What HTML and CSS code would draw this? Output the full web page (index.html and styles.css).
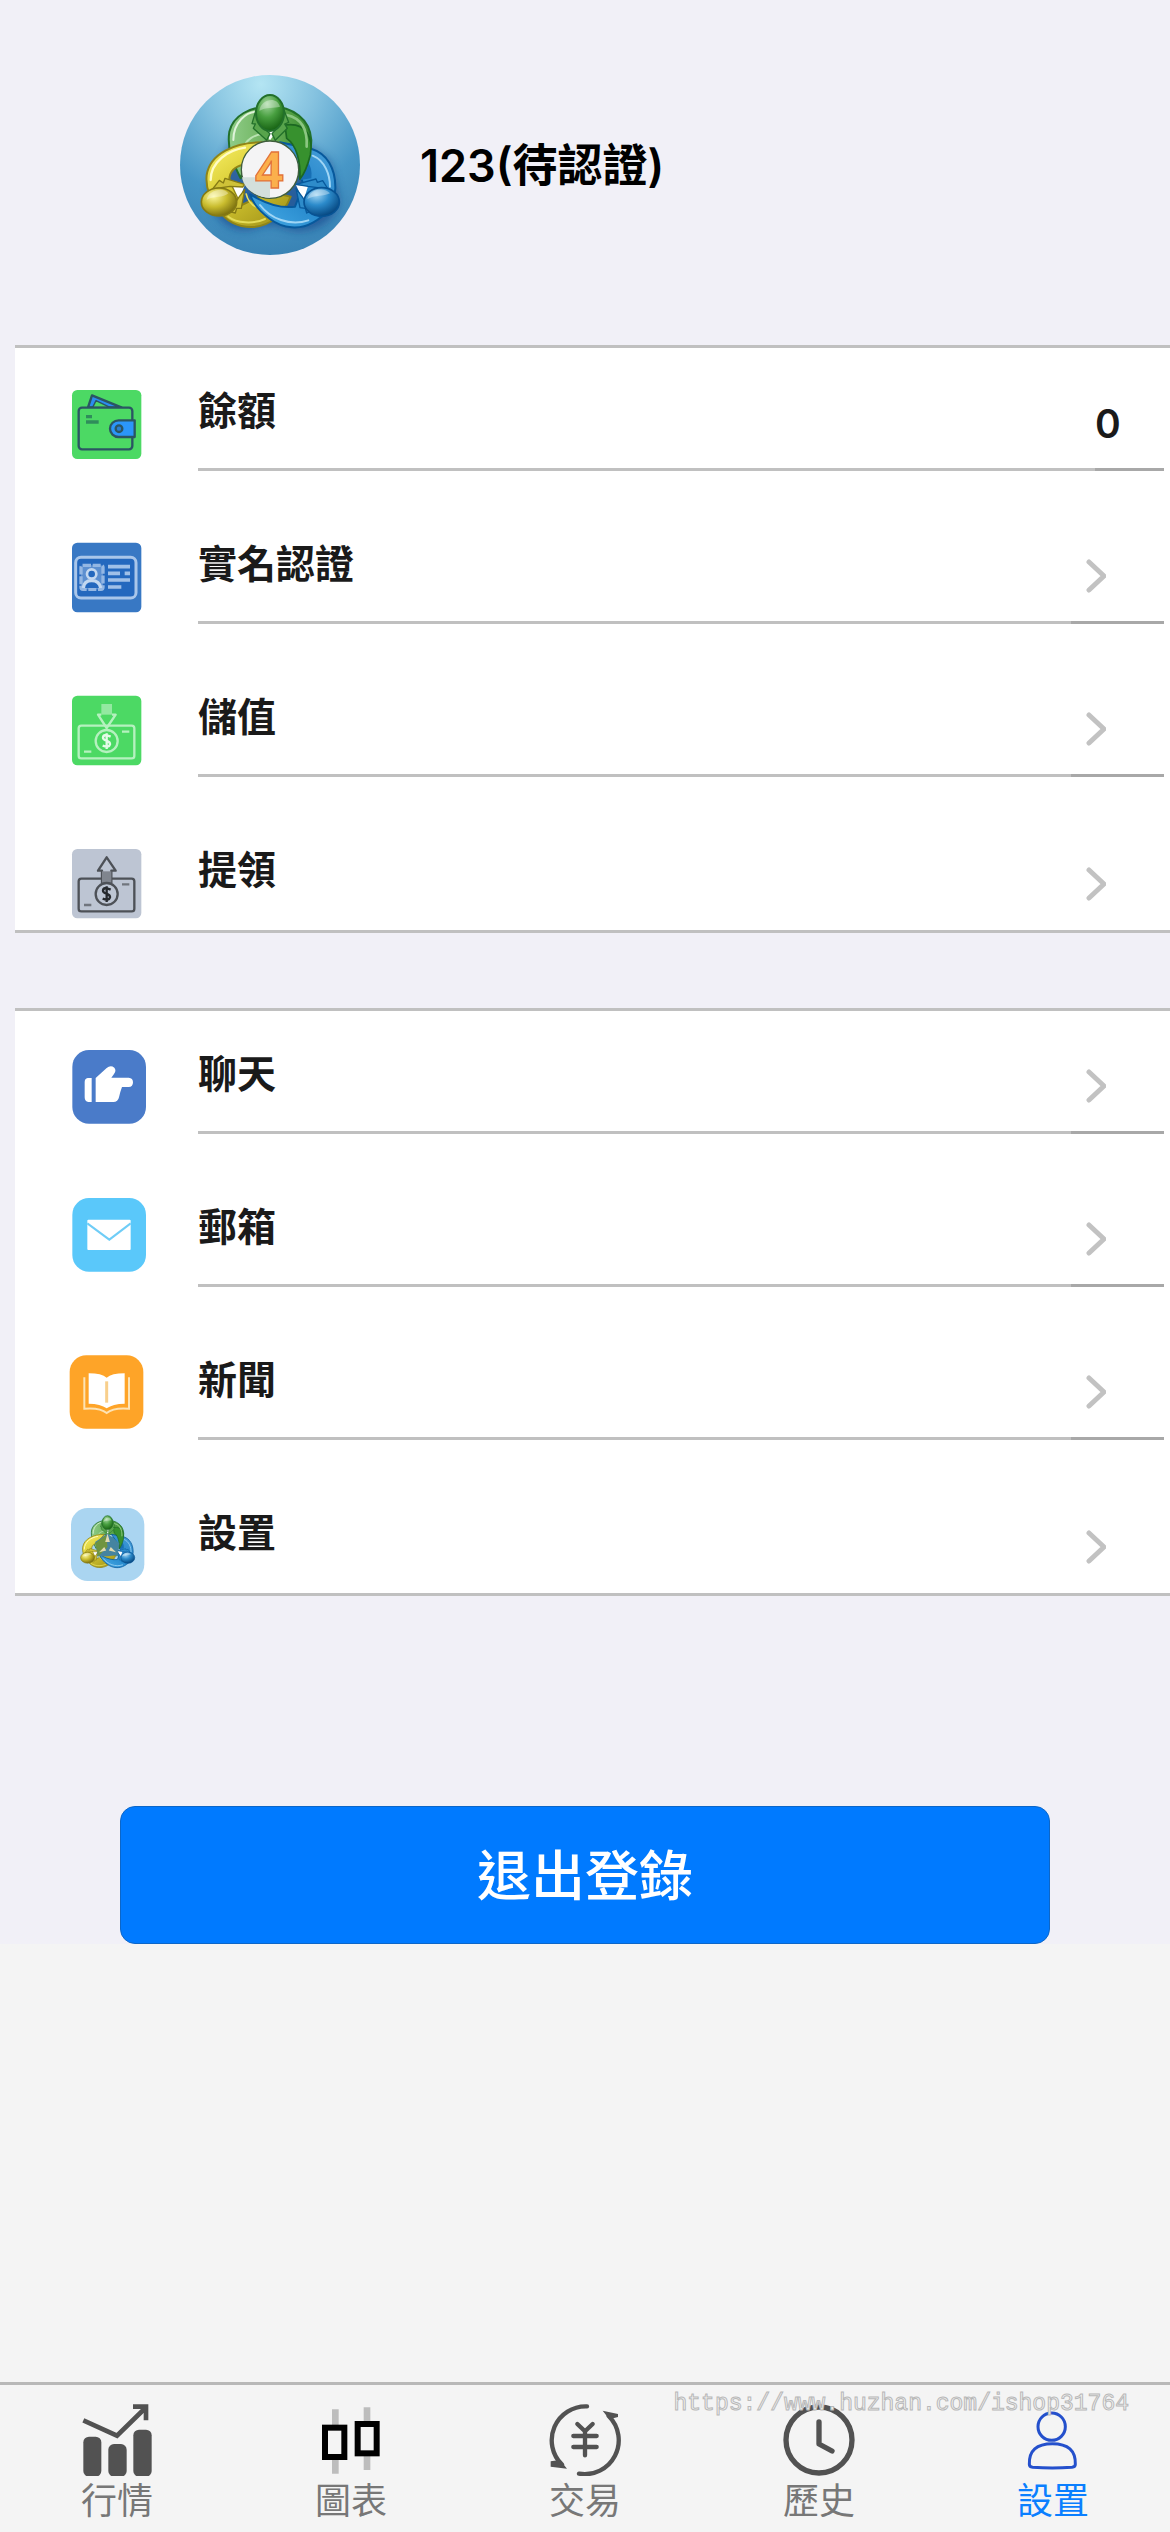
FILE: index.html
```
<!DOCTYPE html>
<html lang="zh-Hant">
<head>
	<title>設置</title>
	<meta charset="UTF-8">
	<meta name="viewport" content="width=device-width, initial-scale=1.0">
	<link rel="stylesheet" href="styles.css">
</head>
<body>
	<main>
		<header class="profile">
			<svg class="avatar" viewBox="30 30 540 540" aria-hidden="true">
				<defs>
					<radialGradient id="sky" cx=".45" cy=".05" r="1">
						<stop offset="0" stop-color="#b4e5f3"/>
						<stop offset=".3" stop-color="#86c3e0"/>
						<stop offset=".65" stop-color="#4797c7"/>
						<stop offset="1" stop-color="#3780b2"/>
					</radialGradient>
					<linearGradient id="green" x2="1" y2="0">
						<stop offset="0" stop-color="#8fcc88"/>
						<stop offset=".55" stop-color="#66ad55"/>
						<stop offset="1" stop-color="#35892c"/>
					</linearGradient>
					<linearGradient id="yellow" x2=".7" y2="1">
						<stop offset="0" stop-color="#fbf36a"/>
						<stop offset=".5" stop-color="#d8cb32"/>
						<stop offset="1" stop-color="#a89a1c"/>
					</linearGradient>
					<linearGradient id="blue" x1=".1" y1="1" x2=".9" y2="0">
						<stop offset="0" stop-color="#45aae6"/>
						<stop offset=".5" stop-color="#2385c9"/>
						<stop offset="1" stop-color="#489fda"/>
					</linearGradient>
					<radialGradient id="green-head" cx=".4" cy=".25" r=".75">
						<stop offset="0" stop-color="#a5d8a0"/>
						<stop offset=".5" stop-color="#489f40"/>
						<stop offset="1" stop-color="#176313"/>
					</radialGradient>
					<radialGradient id="yellow-head" cx=".35" cy=".3" r=".75">
						<stop offset="0" stop-color="#fbf79c"/>
						<stop offset=".5" stop-color="#c9bc2e"/>
						<stop offset="1" stop-color="#766b0c"/>
					</radialGradient>
					<radialGradient id="blue-head" cx=".35" cy=".25" r=".8">
						<stop offset="0" stop-color="#9fd4f3"/>
						<stop offset=".45" stop-color="#2c8bcb"/>
						<stop offset="1" stop-color="#03427b"/>
					</radialGradient>
					<filter id="soft" x="-20%" y="-20%" width="140%" height="140%">
						<feGaussianBlur stdDeviation="14"/>
					</filter>
					<!-- three people in a ring, shared by the avatar and the settings row -->
					<g id="people" stroke-linejoin="round">
						<path d="M212 340C190 295 170 255 178 200C190 150 240 126 300 124C370 126 420 162 424 225C424 270 410 310 390 342L370 240L300 230L240 245Z" fill="url(#green)" stroke="#22702a" stroke-width="6"/>
						<path d="M222 250C225 225 255 207 280 208" fill="none" stroke="#b9e2b1" stroke-width="6"/>
						<path d="M190 225C190 170 230 142 256 140" fill="none" stroke="#dff3da" stroke-width="6" stroke-linecap="round"/>
						<path d="M275 232C195 232 120 265 110 330C106 370 118 400 145 430C165 470 205 488 250 486C300 482 340 450 362 395L300 380L215 420L178 345C178 320 195 303 220 300Z" fill="url(#yellow)" stroke="#8f8418" stroke-width="6"/>
						<path d="M228 385C235 415 255 432 290 430" fill="none" stroke="#e8df63" stroke-width="5"/>
						<path d="M122 345C122 290 175 255 225 248" fill="none" stroke="#fffcc5" stroke-width="7" stroke-linecap="round"/>
						<path d="M175 455C200 475 250 478 285 462" fill="none" stroke="#e4dc5a" stroke-width="6" stroke-linecap="round"/>
						<path d="M330 232L425 252C470 265 497 310 496 370C492 420 470 450 430 472C390 495 340 492 300 462C270 440 250 420 240 388L262 400C300 420 340 430 375 425L400 360L385 310Z" fill="url(#blue)" stroke="#07599c" stroke-width="6"/>
						<path d="M412 290Q428 308 424 340L390 345Z" fill="#176fb4"/>
						<path d="M428 272C465 287 480 330 480 365M270 420C300 460 360 485 415 466" fill="none" stroke="#9fd5f5" stroke-width="6" stroke-linecap="round"/>
						<path d="M345 180C410 170 430 220 421 270C412 305 404 325 390 342C392 290 380 240 350 220Z" fill="#37912e" stroke="#1c6822" stroke-width="5"/>
						<path d="M350 150C395 160 413 195 410 245" fill="none" stroke="#8bc681" stroke-width="8" stroke-linecap="round"/>
						<!-- collars and shirts -->
						<path d="M275 190L300 226L326 190Z" fill="#fff"/>
						<path d="M258 135L246 176L256 177L250 190L290 226L300 206L270 178ZM342 135L356 172L344 177L352 190L316 226L306 206L332 178Z" fill="#58a44c" stroke="#22702a" stroke-width="4"/>
						<path d="M188 362L225 358L208 405Z" fill="#fff"/>
						<path d="M128 372L148 346L160 354L165 340L224 358L218 366L180 364ZM208 395L224 374L214 430L200 430L196 444L178 440Z" fill="#cfc238" stroke="#857a14" stroke-width="4"/>
						<path d="M378 360L414 364L400 408Z" fill="#fff"/>
						<path d="M378 358L438 342L442 352L458 347L474 372L414 364ZM378 370L390 428L406 430L410 444L428 436L400 400Z" fill="#2e8cca" stroke="#07599c" stroke-width="4"/>
						<ellipse cx="300" cy="144" rx="42" ry="54" fill="url(#green-head)" stroke="#22702a" stroke-width="6"/>
						<ellipse cx="147" cy="411" rx="53" ry="42" fill="url(#yellow-head)" stroke="#857a14" stroke-width="5"/>
						<ellipse cx="455" cy="411" rx="53" ry="43" fill="url(#blue-head)" stroke="#075394" stroke-width="5"/>
						<path d="M268 138C270 105 320 90 330 125C315 130 285 125 268 138Z" fill="#fff" opacity=".35"/>
						<path d="M110 405C115 375 160 365 175 385C160 400 130 392 110 405Z" fill="#fff" opacity=".35"/>
						<path d="M412 402C420 370 465 365 480 385C460 395 435 390 412 402Z" fill="#fff" opacity=".35"/>
					</g>
				</defs>
				<circle cx="300" cy="300" r="270" fill="url(#sky)"/>
				<path d="M120 360C110 470 200 510 255 490Q300 470 345 490C410 515 510 470 506 400L480 290L400 230L200 200Z" fill="#133f86" opacity=".65" filter="url(#soft)"/>
				<use href="#people"/>
				<circle cx="300" cy="314" r="86" fill="#f4f4f5" stroke="#3f5d3d" stroke-width="4"/>
				<path d="M216 337H300V398C255 398 221 370 216 337Z" fill="#d3dfdb"/>
				<text class="avatar-number" x="298" y="368" text-anchor="middle">4</text>
			</svg>
			<h1>123(待認證)</h1>
		</header>

		<section class="group">
			<div class="row">
				<svg class="icon" viewBox="198 144 270 270" aria-hidden="true">
					<rect x="216" y="180" width="208" height="207" rx="16" fill="#4cd964"/>
					<g stroke="#2b5563" stroke-width="7" stroke-linejoin="round">
						<path d="M264 232L276 196L364 232Z" fill="#2b8cf0"/>
						<path d="M278 232L288 212L330 232Z" fill="#4cd964" stroke-width="4"/>
						<rect x="236" y="233" width="161" height="125" rx="10" fill="#4cd964"/>
						<path d="M404 271H356a26 25 0 0 0 0 50H404Z" fill="#2b96fa"/>
						<circle cx="357" cy="296" r="10" fill="#2b7ed0"/>
					</g>
					<path d="M258 260H276M258 276H296" stroke="#2f8d5b" stroke-width="10"/>
				</svg>
				<div class="label">餘額</div>
				<div class="after value">0</div>
			</div>
			<a class="row" href="#verify">
				<svg class="icon" viewBox="198 603 270 270" aria-hidden="true">
					<rect x="216" y="638" width="208" height="209" rx="16" fill="#3878c4"/>
					<rect x="227" y="682" width="181" height="122" rx="16" fill="#2468be" stroke="#a9c6ea" stroke-width="9"/>
					<rect x="243" y="706" width="66" height="72" rx="6" fill="#5c8fd0" stroke="#94b7e3" stroke-width="10" stroke-dasharray="24 5"/>
					<circle cx="275" cy="732" r="14" fill="#2468be" stroke="#c3d8f0" stroke-width="8"/>
					<path d="M250 774Q252 752 275 752Q298 752 302 774" fill="#2468be" stroke="#c3d8f0" stroke-width="10"/>
					<path d="M324 710H390M324 730H360M374 730H390M324 750H390M324 771H364" stroke="#a0c0e8" stroke-width="11"/>
				</svg>
				<div class="label">實名認證</div>
				<div class="after"><svg class="chevron" viewBox="0 0 20 34" aria-hidden="true"><path d="M3 3L18 17L3 31"/></svg></div>
			</a>
			<a class="row" href="#deposit">
				<svg class="icon" viewBox="198 102 270 270" aria-hidden="true">
					<rect x="216" y="137" width="208" height="209" rx="16" fill="#4cd964"/>
					<path d="M304 162H336V194H304Z" fill="#93e9a1"/>
					<g fill="none" stroke="#b5f1bf" stroke-width="7" stroke-linejoin="round">
						<path d="M304 194H294L320 234L347 194H336"/>
						<rect x="236" y="227" width="167" height="98" rx="8"/>
						<circle cx="320" cy="273" r="33" fill="#4cd964"/>
						<path d="M332 260Q310 250 309 263C309 274 332 270 330 283Q327 294 308 287M320 250V297" stroke="#e4fbe8"/>
						<path d="M366 245H388M252 305H274"/>
					</g>
				</svg>
				<div class="label">儲值</div>
				<div class="after"><svg class="chevron" viewBox="0 0 20 34" aria-hidden="true"><path d="M3 3L18 17L3 31"/></svg></div>
			</a>
			<a class="row" href="#withdraw">
				<svg class="icon" viewBox="198 561 270 270" aria-hidden="true">
					<rect x="216" y="597" width="208" height="208" rx="16" fill="#bdc5d3"/>
					<g fill="none" stroke="#4d5157" stroke-width="7" stroke-linejoin="round">
						<rect x="236" y="686" width="167" height="98" rx="8"/>
						<path d="M306 698V662H294L320 622L347 662H334V698Z" fill="#bdc5d3"/>
						<path d="M306 664H334V698H306Z" fill="#80858e" stroke="none"/>
						<circle cx="320" cy="732" r="33" fill="#bdc5d3"/>
						<path d="M332 719Q310 709 309 722C309 733 332 729 330 742Q327 753 308 746M320 709V756" stroke="#26292d"/>
						<path d="M366 703H388M252 765H274" stroke="#70757d"/>
					</g>
				</svg>
				<div class="label">提領</div>
				<div class="after"><svg class="chevron" viewBox="0 0 20 34" aria-hidden="true"><path d="M3 3L18 17L3 31"/></svg></div>
			</a>
		</section>

		<section class="group">
			<a class="row" href="#chat">
				<svg class="icon" viewBox="198 153 270 270" aria-hidden="true">
					<rect x="217" y="180" width="221" height="221" rx="50" fill="#4a7bc9"/>
					<path d="M263 264H275V336H265Q254 334 254 322V276Q254 266 263 264ZM287 264L320 234Q332 224 343 233Q350 241 342 252L334 263H386Q399 264 399 277Q399 291 386 291H366Q361 304 357 322Q354 336 340 336H287Z" fill="#fff"/>
				</svg>
				<div class="label">聊天</div>
				<div class="after"><svg class="chevron" viewBox="0 0 20 34" aria-hidden="true"><path d="M3 3L18 17L3 31"/></svg></div>
			</a>
			<a class="row" href="#mail">
				<svg class="icon" viewBox="198 612 270 270" aria-hidden="true">
					<rect x="217" y="624" width="221" height="221" rx="50" fill="#5ac8fa"/>
					<rect x="262" y="689" width="130" height="91" rx="3" fill="#fff"/>
					<path d="M262 700L328 749L392 700" fill="none" stroke="#6fcdf7" stroke-width="6"/>
				</svg>
				<div class="label">郵箱</div>
				<div class="after"><svg class="chevron" viewBox="0 0 20 34" aria-hidden="true"><path d="M3 3L18 17L3 31"/></svg></div>
			</a>
			<a class="row" href="#news">
				<svg class="icon" viewBox="198 111 270 270" aria-hidden="true">
					<rect x="209" y="136" width="221" height="220" rx="50" fill="#fea428"/>
					<path d="M253 202V296Q300 292 320 309Q340 292 387 296V202" fill="none" stroke="#fde3b4" stroke-width="6"/>
					<path d="M266 190Q305 190 320 203Q335 190 374 190V281Q338 281 320 295Q302 281 266 281Z" fill="#fff"/>
					<path d="M320 214V278" stroke="#f8cf8c" stroke-width="9"/>
				</svg>
				<div class="label">新聞</div>
				<div class="after"><svg class="chevron" viewBox="0 0 20 34" aria-hidden="true"><path d="M3 3L18 17L3 31"/></svg></div>
			</a>
			<a class="row" href="#settings">
				<svg class="icon" viewBox="198 570 270 270" aria-hidden="true">
					<rect x="213" y="594" width="220" height="219" rx="50" fill="#aad5f1"/>
					<g transform="translate(205 582) scale(.392)">
						<path d="M215 250H385V400H215Z" fill="#4a8f9a"/>
						<use href="#people"/>
						<path d="M205 290L300 225L390 300L375 390L300 400L230 400Z" fill="#4584a0"/>
						<path d="M205 300L290 235L300 330L230 400Z" fill="#6f9440"/>
						<path d="M300 225L318 290H282ZM235 370L275 330L290 355ZM365 370L325 330L310 355Z" fill="#e0d9b0"/>
					</g>
				</svg>
				<div class="label">設置</div>
				<div class="after"><svg class="chevron" viewBox="0 0 20 34" aria-hidden="true"><path d="M3 3L18 17L3 31"/></svg></div>
			</a>
		</section>

		<button class="logout" type="button">退出登錄</button>
	</main>

	<nav class="tabbar">
		<a class="tab" href="#quotes">
			<svg class="tab-icon" viewBox="243 102 216 216" aria-hidden="true">
				<g fill="#525252">
					<rect x="250" y="200" width="54" height="120" rx="17"/>
					<rect x="325" y="222" width="55" height="98" rx="17"/>
					<rect x="400" y="179" width="55" height="141" rx="17"/>
				</g>
				<path d="M250 151L351 197L436 114M399 110H438V151" fill="none" stroke="#525252" stroke-width="14"/>
			</svg>
			<span>行情</span>
		</a>
		<a class="tab" href="#charts">
			<svg class="tab-icon" viewBox="945 102 216 216" aria-hidden="true">
				<path d="M1006 118V311M1101 112V300" stroke="#bdbdbd" stroke-width="20"/>
				<g fill="#f4f4f4" stroke="#000" stroke-width="18">
					<rect x="975" y="173" width="58" height="88"/>
					<rect x="1073" y="162" width="57" height="88"/>
				</g>
			</svg>
			<span>圖表</span>
		</a>
		<a class="tab" href="#trade">
			<svg class="tab-icon" viewBox="147 102 216 216" aria-hidden="true">
				<g fill="none" stroke="#525252" stroke-width="13" stroke-linecap="round">
					<path d="M261 109A102 102 0 0 0 186 284"/>
					<path d="M237 311A102 102 0 0 0 326 138"/>
					<path d="M232 162L255 184L278 162M255 184V256M220 198H290M220 231H290"/>
				</g>
				<path d="M308 122L354 132V141L328 148ZM201 296L152 290V274L180 270Z" fill="#525252"/>
			</svg>
			<span>交易</span>
		</a>
		<a class="tab" href="#history">
			<svg class="tab-icon" viewBox="849 102 216 216" aria-hidden="true">
				<g fill="none" stroke="#525252" stroke-width="16" stroke-linecap="round" stroke-linejoin="round">
					<circle cx="957" cy="210" r="99"/>
					<path d="M957 156V222L996 243"/>
				</g>
			</svg>
			<span>歷史</span>
		</a>
		<a class="tab active" href="#settings">
			<svg class="tab-icon" viewBox="471 102 216 216" aria-hidden="true">
				<g fill="none" stroke="#2450cc" stroke-width="9" stroke-linejoin="round">
					<circle cx="575" cy="170" r="41"/>
					<path d="M508 283Q506 221 577 221Q648 221 646 283Q646 291 636 292Q577 296 518 292Q508 291 508 283Z"/>
				</g>
			</svg>
			<span>設置</span>
		</a>
		<div class="watermark">https://www.huzhan.com/ishop31764</div>
	</nav>
</body>
</html>
```
FILE: styles.css
```
* {box-sizing: border-box;}
body {
	margin: 0;
	min-height: 100vh;
	display: flex;
	flex-direction: column;
	background-color: #f4f4f4;
	color: #1a1a1a;
	font-family: Inter, "Noto Sans CJK TC", sans-serif;
}
a {
	color: inherit;
	text-decoration: none;
}
svg {display: block;}
main {
	display: flex;
	flex-direction: column;
	background-color: #f1f0f7;
}

/* profile */
.profile {
	display: flex;
	align-items: center;
	gap: 60px;
	padding: 75px 30px 90px 180px;
}
.avatar {
	width: 180px;
	height: 180px;
}
.avatar-number {
	font: bold 150px "Open Sans", sans-serif;
	fill: #fbb04c;
	stroke: #e2733a;
	stroke-width: 4px;
}
h1 {
	margin: 0;
	padding-top: 2px;
	color: #000;
	font-size: 45px;
	font-weight: 600;
	line-height: 60px;
}

/* lists */
.group {
	margin: 0 0 75px 15px;
	border-top: 3px solid #c0c0c0;
	border-bottom: 3px solid #c0c0c0;
	background-color: #fff;
}
.row {
	display: flex;
	padding: 60px 6px 0 51px;
	font-size: 39px;
	font-weight: 600;
}
.row:first-child {padding-top: 30px;}
.icon {
	width: 90px;
	height: 90px;
	margin-right: 42px;
}
.label, .after {
	height: 93px;
	border-bottom: 3px solid #c0c0c0;
}
.label {
	flex: 1;
	line-height: 66px;
}
.after {
	display: flex;
	align-items: center;
	width: 93px;
	padding-left: 15px;
	border-color: #a8a8a8;
}
.value {
	width: 69px;
	padding-left: 0;
}
.row:last-child .label, .row:last-child .after {border-bottom: none;}
.chevron {
	width: 20px;
	height: 34px;
	fill: none;
	stroke: #c2c2c2;
	stroke-width: 5px;
	stroke-linecap: round;
	stroke-linejoin: round;
}

.logout {
	margin: 135px 120px 0;
	padding: 30px 28px 26px;
	border: 1px solid #0c66c8;
	border-radius: 15px;
	background-color: #007aff;
	color: #fff;
	font-family: inherit;
	font-size: 54px;
	font-weight: 500;
	line-height: 80px;
}

/* bottom tabs */
.tabbar {
	position: relative;
	display: flex;
	margin-top: auto;
	padding: 19px 0 6px;
	border-top: 3px solid #b8b8b8;
}
.tab {
	flex: 1;
	display: flex;
	flex-direction: column;
	align-items: center;
	color: #777;
	font-size: 36px;
	line-height: 50px;
}
.tab-icon {
	width: 72px;
	height: 72px;
}
.active {color: #0a7fff;}
.watermark {
	position: absolute;
	top: 3px;
	right: 41px;
	color: #f4f4f4;
	font-family: "Liberation Mono", monospace;
	font-size: 23px;
	line-height: 32px;
	-webkit-text-stroke: 1px #b8b8b8;
	pointer-events: none;
}
```
